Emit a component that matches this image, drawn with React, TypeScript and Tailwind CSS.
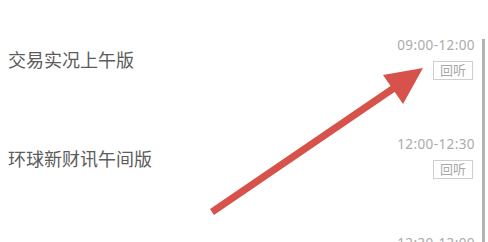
import React from 'react';

const programs = [
  { title: '交易实况上午版', time: '09:00-12:00', replay: true },
  { title: '环球新财讯午间版', time: '12:00-12:30', replay: true },
  { title: '', time: '12:30-13:00', replay: false },
];

const Arrow = () => (
  <svg className="absolute left-0 top-0 pointer-events-none" width="488" height="242" viewBox="0 0 488 242">
    <line x1="212" y1="212" x2="394" y2="88" stroke="#d6524a" strokeWidth="7" />
    <polygon points="423,68 383,75 403,104" fill="#d6524a" />
  </svg>
);

const App = () => {
  return (
    <div
      className="relative w-[488px] h-[242px] overflow-hidden bg-white"
      style={{ fontFamily: '"Noto Sans", "Noto Sans CJK SC", sans-serif' }}
    >
      <div className="flex flex-col pt-[10px]">
        {programs.map((p) => (
          <div key={p.time} className="flex items-center justify-between h-[99px] pl-[8px] pr-[13px]">
            <span className="text-[18px] text-[#5c5c5c] leading-none">{p.title}</span>
            <div className="flex flex-col items-end gap-[9px]">
              <span className="text-[13.5px] text-[#ababab] leading-none tracking-[0.4px]">{p.time}</span>
              {p.replay ? (
                <button className="w-[40px] h-[19px] border border-[#cfcfcf] text-[13px] text-[#a8a8a8] leading-none flex items-center justify-center mr-[2px]">
                  回听
                </button>
              ) : (
                <div className="h-[19px]" />
              )}
            </div>
          </div>
        ))}
      </div>
      <div className="absolute right-[3px] top-[39px] bottom-0 w-[3px] bg-[#b3b3b3]" />
      <Arrow />
    </div>
  );
};

export default App;
